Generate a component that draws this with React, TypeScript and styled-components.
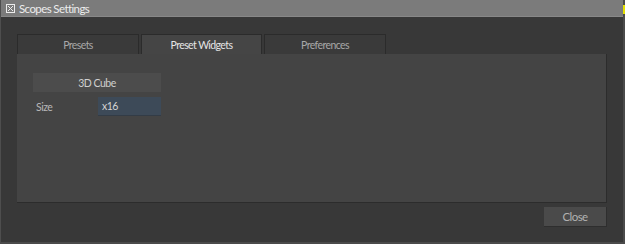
import styled, { createGlobalStyle } from 'styled-components'

const GlobalStyle = createGlobalStyle`
  html, body {
    margin: 0;
    padding: 0;
    background: #383838;
  }
  body {
    font-family: Lato, 'DejaVu Sans', sans-serif;
    font-size: 11px;
    letter-spacing: -0.5px;
  }
`

// --- frame ---

const Screen = styled.div`
  display: flex;
  width: 625px;
  height: 244px;
  overflow: hidden;
`

const Window = styled.div`
  flex: 1;
  display: flex;
  flex-direction: column;
  background: #383838;
  border-left: 1px solid #4e4e4e;
  border-bottom: 2px solid #4a4a4a;
`

const EdgeStrip = styled.div`
  width: 2px;
  background: #4a4a4a;
  display: flex;
  flex-direction: column;
  padding-top: 5px;

  &::before {
    content: '';
    display: block;
    height: 9px;
    background: #e4e000;
  }
`

const TitleBar = styled.div`
  height: 16px;
  display: flex;
  align-items: center;
  gap: 4px;
  padding-left: 5px;
  background: #7b7b7b;
  border-bottom: 1px solid #888;
  color: #ececec;
  font-size: 11.5px;
  letter-spacing: -0.6px;
`

const Body = styled.div`
  flex: 1;
  display: flex;
  flex-direction: column;
  padding: 17px 16px 0 16px;
`

// --- tabs ---

const TabRow = styled.div`
  display: flex;
  gap: 2px;
`

const Tab = styled.div<{ $active?: boolean }>`
  width: ${(p) => (p.$active ? '121px' : '122px')};
  height: 20px;
  display: flex;
  align-items: center;
  justify-content: center;
  box-sizing: border-box;
  border: 1px solid #2b2b2b;
  border-bottom: none;
  background: ${(p) => (p.$active ? '#454545' : '#3a3a3a')};
  color: ${(p) => (p.$active ? '#e6e6e6' : '#a8a8a8')};
  font-size: 10.5px;
  letter-spacing: -0.6px;
`

const Panel = styled.div`
  height: 149px;
  box-sizing: border-box;
  background: #444444;
  border-right: 1px solid #2c2c2c;
  border-bottom: 1px solid #2c2c2c;
  padding: 19px 0 0 16px;
  display: flex;
  flex-direction: column;
  gap: 5px;
`

const WideButton = styled.div`
  width: 128px;
  height: 19px;
  display: flex;
  align-items: center;
  justify-content: center;
  background: #4c4c4c;
  color: #cfcfcf;
  font-size: 10.5px;
`

const FieldRow = styled.div`
  display: flex;
  align-items: center;
`

const FieldLabel = styled.span`
  width: 65px;
  box-sizing: border-box;
  padding-left: 3px;
  color: #b8b8b8;
  font-size: 10.5px;
`

const ValueField = styled.div`
  width: 63px;
  height: 19px;
  box-sizing: border-box;
  display: flex;
  align-items: center;
  padding-left: 4px;
  background: #3d4a58;
  border-bottom: 1px solid #333c46;
  color: #d4d4d4;
  font-size: 10.5px;
`

// --- footer ---

const Footer = styled.div`
  display: flex;
  justify-content: flex-end;
  padding-top: 4px;
`

const CloseButton = styled.div`
  width: 63px;
  height: 20px;
  box-sizing: border-box;
  display: flex;
  align-items: center;
  justify-content: center;
  background: #4a4a4a;
  border-right: 1px solid #2e2e2e;
  border-bottom: 1px solid #2e2e2e;
  color: #b2b2b2;
  font-size: 11.5px;
  letter-spacing: -0.6px;
`

const CloseBoxIcon = () => (
  <svg width="9" height="9" viewBox="0 0 9 9" fill="none" stroke="#ececec" strokeWidth="1">
    <rect x="0.5" y="0.5" width="8" height="8" />
    <path d="M2 2 L7 7 M7 2 L2 7" />
  </svg>
)

export default function App() {
  return (
    <>
      <GlobalStyle />
      <Screen>
        <Window>
          <TitleBar>
            <CloseBoxIcon />
            Scopes Settings
          </TitleBar>
          <Body>
            <TabRow>
              <Tab>Presets</Tab>
              <Tab $active>Preset Widgets</Tab>
              <Tab>Preferences</Tab>
            </TabRow>
            <Panel>
              <WideButton>3D Cube</WideButton>
              <FieldRow>
                <FieldLabel>Size</FieldLabel>
                <ValueField>x16</ValueField>
              </FieldRow>
            </Panel>
            <Footer>
              <CloseButton>Close</CloseButton>
            </Footer>
          </Body>
        </Window>
        <EdgeStrip />
      </Screen>
    </>
  )
}
